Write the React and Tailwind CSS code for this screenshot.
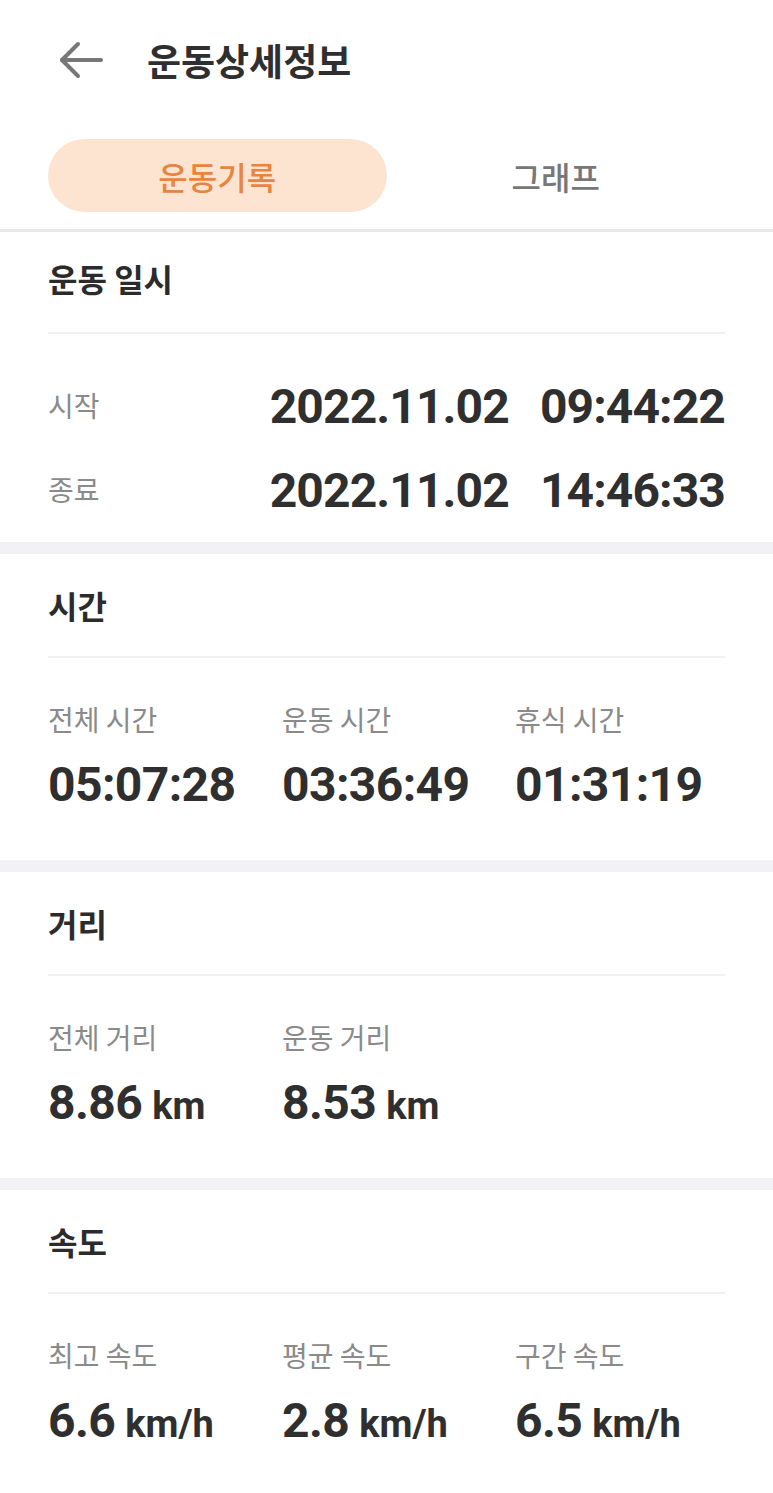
import React from 'react';

const kr = { fontFamily: '"Noto Sans CJK KR", "Noto Sans", sans-serif' };
const num = { fontFamily: 'Roboto, "Noto Sans CJK KR", sans-serif' };

function SectionTitle({ children, h = 'h-[102px]' }) {
    return (
        <div className={`${h} flex items-center`}>
            <span className="text-[32px] font-bold text-[#2b2b2b] leading-none" style={kr}>{children}</span>
        </div>
    );
}

function Divider() {
    return <div className="h-[2px] bg-[#f1f1f1]" />;
}

function Band() {
    return <div className="h-[12px] bg-[#f2f2f4]" />;
}

function Stat({ label, value, unit }) {
    return (
        <div className="flex flex-col">
            <span className="text-[28px] leading-[36px] text-[#8a8a8a]" style={kr}>{label}</span>
            <span className="mt-[20px] h-[56px] flex items-center text-[#2f2f2f] font-bold whitespace-nowrap" style={num}>
                <span className="text-[48px] leading-none tracking-[-0.6px]">{value}</span>
                {unit && <span className="ml-[10px] text-[38px] leading-none mt-[6px]">{unit}</span>}
            </span>
        </div>
    );
}

function StatSection({ title, items }) {
    return (
        <section className="bg-white px-[48px]">
            <SectionTitle>{title}</SectionTitle>
            <Divider />
            <div className="pt-[43px] pb-[47px] grid grid-cols-[234px_233px_1fr]">
                {items.map((it) => (
                    <Stat key={it.label} {...it} />
                ))}
            </div>
        </section>
    );
}

function DateRow({ label, date, time }) {
    return (
        <div className="h-[84px] flex items-center justify-between">
            <span className="text-[28px] text-[#8a8a8a]" style={kr}>{label}</span>
            <span className="flex items-center gap-[31px] text-[48px] font-bold text-[#2f2f2f] leading-none tracking-[-0.9px] mt-[3px]" style={num}>
                <span>{date}</span>
                <span>{time}</span>
            </span>
        </div>
    );
}

export default function App() {
    return (
        <div className="w-[773px] min-h-[1493px] bg-white overflow-hidden">
            <header className="h-[120px] flex items-center pl-[58px]">
                <svg width="46" height="38" viewBox="0 0 46 38" fill="none" stroke="#777" strokeWidth="4" strokeLinecap="round" strokeLinejoin="round">
                    <path d="M4 19H43" />
                    <path d="M20 3L4 19L20 35" />
                </svg>
                <h1 className="ml-[43px] text-[37px] font-bold text-[#2f2f2f] leading-none" style={kr}>운동상세정보</h1>
            </header>

            <div className="px-[48px] pt-[19px] pb-[17px] grid grid-cols-2">
                <div className="h-[73px] rounded-full bg-[#fde4d1] flex items-center justify-center">
                    <span className="text-[32px] font-medium text-[#e8843f]" style={kr}>운동기록</span>
                </div>
                <div className="h-[73px] flex items-center justify-center">
                    <span className="text-[32px] font-medium text-[#777]" style={kr}>그래프</span>
                </div>
            </div>
            <div className="h-[3px] bg-[#e8e8e8]" />

            <section className="bg-white px-[48px]">
                <SectionTitle h="h-[92px]">운동 일시</SectionTitle>
                <div className="h-[8px]" />
                <Divider />
                <div className="pt-[29px] pb-[11px]">
                    <DateRow label="시작" date="2022.11.02" time="09:44:22" />
                    <DateRow label="종료" date="2022.11.02" time="14:46:33" />
                </div>
            </section>
            <Band />

            <StatSection
                title="시간"
                items={[
                    { label: '전체 시간', value: '05:07:28' },
                    { label: '운동 시간', value: '03:36:49' },
                    { label: '휴식 시간', value: '01:31:19' },
                ]}
            />
            <Band />

            <StatSection
                title="거리"
                items={[
                    { label: '전체 거리', value: '8.86', unit: 'km' },
                    { label: '운동 거리', value: '8.53', unit: 'km' },
                ]}
            />
            <Band />

            <StatSection
                title="속도"
                items={[
                    { label: '최고 속도', value: '6.6', unit: 'km/h' },
                    { label: '평균 속도', value: '2.8', unit: 'km/h' },
                    { label: '구간 속도', value: '6.5', unit: 'km/h' },
                ]}
            />
        </div>
    );
}
